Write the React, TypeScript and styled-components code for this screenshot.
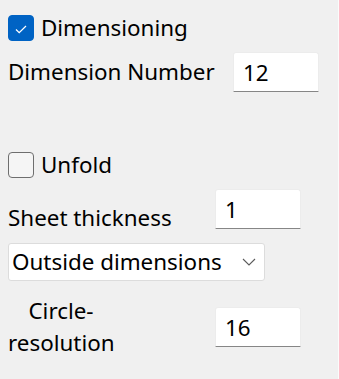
import React from "react";
import styled, { createGlobalStyle } from "styled-components";

const GlobalStyle = createGlobalStyle`
  html, body {
    margin: 0;
    padding: 0;
    background: #f0f0f0;
  }
  body {
    font-family: "Noto Sans", "Open Sans", sans-serif;
    font-size: 22.4px;
    color: #000;
  }
`;

const Panel = styled.div`
  box-sizing: border-box;
  width: 339px;
  height: 379px;
  padding: 15px 0 0 8px;
  display: flex;
  flex-direction: column;
  align-items: flex-start;
  border-right: 1px solid #fbfbfb;
`;

const CheckRow = styled.label<{ $top?: number }>`
  display: flex;
  align-items: center;
  gap: 7px;
  height: 26px;
  margin-top: ${(p) => p.$top ?? 0}px;
  line-height: 1;
  cursor: default;
`;

const Box = styled.span<{ $checked: boolean }>`
  box-sizing: border-box;
  width: 26px;
  height: 26px;
  border-radius: 4px;
  display: flex;
  align-items: center;
  justify-content: center;
  background: ${(p) => (p.$checked ? "#0063c4" : "#f5f5f5")};
  border: 1px solid ${(p) => (p.$checked ? "#0063c4" : "#6e6e6e")};
`;

const FieldRow = styled.div<{ $top: number; $labelWidth: number }>`
  display: grid;
  grid-template-columns: ${(p) => p.$labelWidth}px 86px;
  align-items: center;
  margin-top: ${(p) => p.$top}px;
`;

// $low: label sits near the bottom of the row instead of centred
const Label = styled.span<{ $low?: boolean }>`
  white-space: nowrap;
  line-height: ${(p) => (p.$low ? 23 : 30)}px;
  align-self: ${(p) => (p.$low ? "end" : "center")};
`;

const StackLabel = styled.span`
  width: 106px;
  text-align: center;
  line-height: 32px;
`;

const Input = styled.input`
  box-sizing: border-box;
  width: 86px;
  height: 40px;
  padding: 0 0 0 9px;
  margin: 0;
  background: #fff;
  border: 1px solid #ececec;
  border-bottom: 1px solid #868686;
  border-radius: 3px 3px 0 0;
  font: inherit;
  color: #000;
  outline: none;
`;

const Select = styled.div`
  box-sizing: border-box;
  width: 257px;
  height: 38px;
  margin-top: 14px;
  padding: 0 8px 0 3px;
  display: flex;
  align-items: center;
  justify-content: space-between;
  background: #fff;
  border: 1px solid #dcdcdc;
  border-radius: 3px;
  line-height: 1;
`;

function Check({ checked, label, top }: { checked: boolean; label: string; top?: number }) {
  return (
    <CheckRow $top={top}>
      <Box $checked={checked}>
        {checked && (
          <svg width="12" height="9" viewBox="0 0 12 9" style={{ marginTop: 3 }}>
            <path d="M1 4.5 L4.2 7.6 L11 1" fill="none" stroke="#fff" strokeWidth="1.3" />
          </svg>
        )}
      </Box>
      {label}
    </CheckRow>
  );
}

export default function App() {
  return (
    <>
      <GlobalStyle />
      <Panel>
        <Check checked label="Dimensioning" />
        <FieldRow $top={11} $labelWidth={225}>
          <Label>Dimension Number</Label>
          <Input defaultValue="12" />
        </FieldRow>
        <Check checked={false} label="Unfold" top={60} />
        <FieldRow $top={11} $labelWidth={207}>
          <Label $low>Sheet thickness</Label>
          <Input defaultValue="1" />
        </FieldRow>
        <Select>
          <span>Outside dimensions</span>
          <svg width="14" height="8" viewBox="0 0 14 8">
            <path d="M1 1 L7 7 L13 1" fill="none" stroke="#5a5a5a" strokeWidth="1.1" />
          </svg>
        </Select>
        <FieldRow $top={14} $labelWidth={207}>
          <StackLabel>
            Circle-
            <br />
            resolution
          </StackLabel>
          <Input defaultValue="16" />
        </FieldRow>
      </Panel>
    </>
  );
}
